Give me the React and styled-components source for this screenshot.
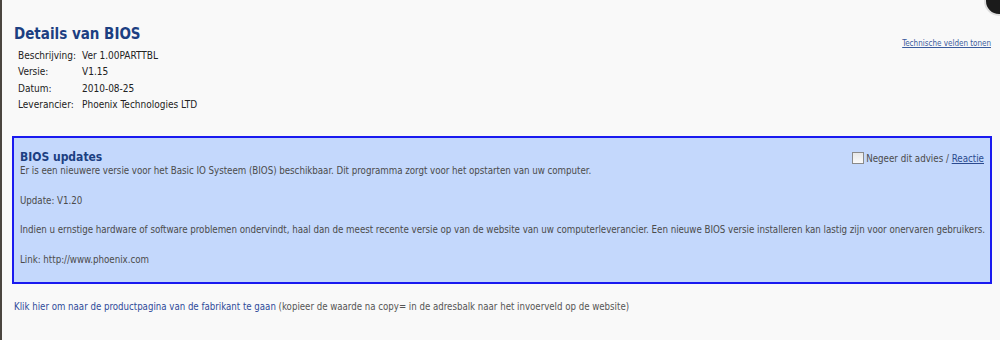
import styled, { createGlobalStyle } from "styled-components"

const GlobalStyle = createGlobalStyle`
  html, body {
    margin: 0;
    padding: 0;
    background: #f8f8f8;
  }
  body {
    font-family: "DejaVu Sans Condensed", "DejaVu Sans", Verdana, sans-serif;
  }
`

const Page = styled.div`
  position: relative;
  width: 1000px;
  height: 340px;
  overflow: hidden;
  background: #f9f9f9;
  border-left: 2px solid #4a4540;
  box-sizing: border-box;
  padding: 27px 8px 0 10px;
`

const CloseKnob = styled.div`
  position: absolute;
  top: -14px;
  right: -14px;
  width: 26px;
  height: 26px;
  border-radius: 50%;
  background: #1b1b1b;
  border: 2px solid #ddd;
`

const Header = styled.div`
  display: flex;
  justify-content: space-between;
  align-items: flex-start;
`

const Title = styled.h1`
  margin: 0 0 0 2px;
  font: bold 15px/15px "DejaVu Sans Condensed", "DejaVu Sans", Verdana, sans-serif;
  color: #1c3f82;
`

const SmallLink = styled.a`
  margin-top: 12px;
  margin-right: 1px;
  font-size: 8px;
  color: #3a5b9c;
  text-decoration: underline;
`

const Details = styled.div`
  display: grid;
  grid-template-columns: 64px auto;
  margin-left: 6px;
  font-size: 10px;
  line-height: 16.3px;
  color: #222;
`

const Update = styled.div`
  margin-top: 23px;
  height: 148px;
  border: 2px solid #1a1af0;
  background: #c4d8fc;
  padding: 12px 6px 0 6px;
  box-sizing: border-box;
  color: #4b4b4b;
  font-size: 9.7px;
`

const UpdateHead = styled.div`
  display: flex;
  justify-content: space-between;
  align-items: center;
`

const UpdateTitle = styled.h2`
  margin: 0;
  font: bold 12px "DejaVu Sans Condensed", "DejaVu Sans", Verdana, sans-serif;
  color: #1c3f82;
`

const Ignore = styled.label`
  display: flex;
  align-items: center;
  gap: 2px;
  margin-top: 2px;
  color: #4b4b4b;
  font-size: 9.7px;
`

const Box = styled.span`
  width: 10px;
  height: 10px;
  border: 1px solid #8a8a8a;
  background: linear-gradient(#e8e8e8, #fafafa);
`

const InlineLink = styled.a`
  color: #2b4a8f;
  text-decoration: underline;
`

const Para = styled.p`
  margin: 0 0 ${(p) => (p.$last ? 0 : 15)}px 0;
  line-height: 14.5px;
  letter-spacing: -0.03px;
  white-space: nowrap;
`

const Footer = styled.p`
  margin: 17px 0 0 2px;
  font-size: 9.6px;
  color: #555;
`

const FooterLink = styled.a`
  color: #2f4b9a;
  text-decoration: none;
`

export default function App() {
  return (
    <>
      <GlobalStyle />
      <Page>
        <CloseKnob />
        <Header>
          <Title>Details van BIOS</Title>
          <SmallLink>Technische velden tonen</SmallLink>
        </Header>
        <Details>
          <span>Beschrijving:</span><span>Ver 1.00PARTTBL</span>
          <span>Versie:</span><span>V1.15</span>
          <span>Datum:</span><span>2010-08-25</span>
          <span>Leverancier:</span><span>Phoenix Technologies LTD</span>
        </Details>
        <Update>
          <UpdateHead>
            <UpdateTitle>BIOS updates</UpdateTitle>
            <Ignore>
              <Box />
              <span>Negeer dit advies / <InlineLink>Reactie</InlineLink></span>
            </Ignore>
          </UpdateHead>
          <Para>Er is een nieuwere versie voor het Basic IO Systeem (BIOS) beschikbaar. Dit programma zorgt voor het opstarten van uw computer.</Para>
          <Para>Update: V1.20</Para>
          <Para>Indien u ernstige hardware of software problemen ondervindt, haal dan de meest recente versie op van de website van uw computerleverancier. Een nieuwe BIOS versie installeren kan lastig zijn voor onervaren gebruikers.</Para>
          <Para $last>Link: http://www.phoenix.com</Para>
        </Update>
        <Footer>
          <FooterLink>Klik hier om naar de productpagina van de fabrikant te gaan</FooterLink> (kopieer de waarde na copy= in de adresbalk naar het invoerveld op de website)
        </Footer>
      </Page>
    </>
  )
}
